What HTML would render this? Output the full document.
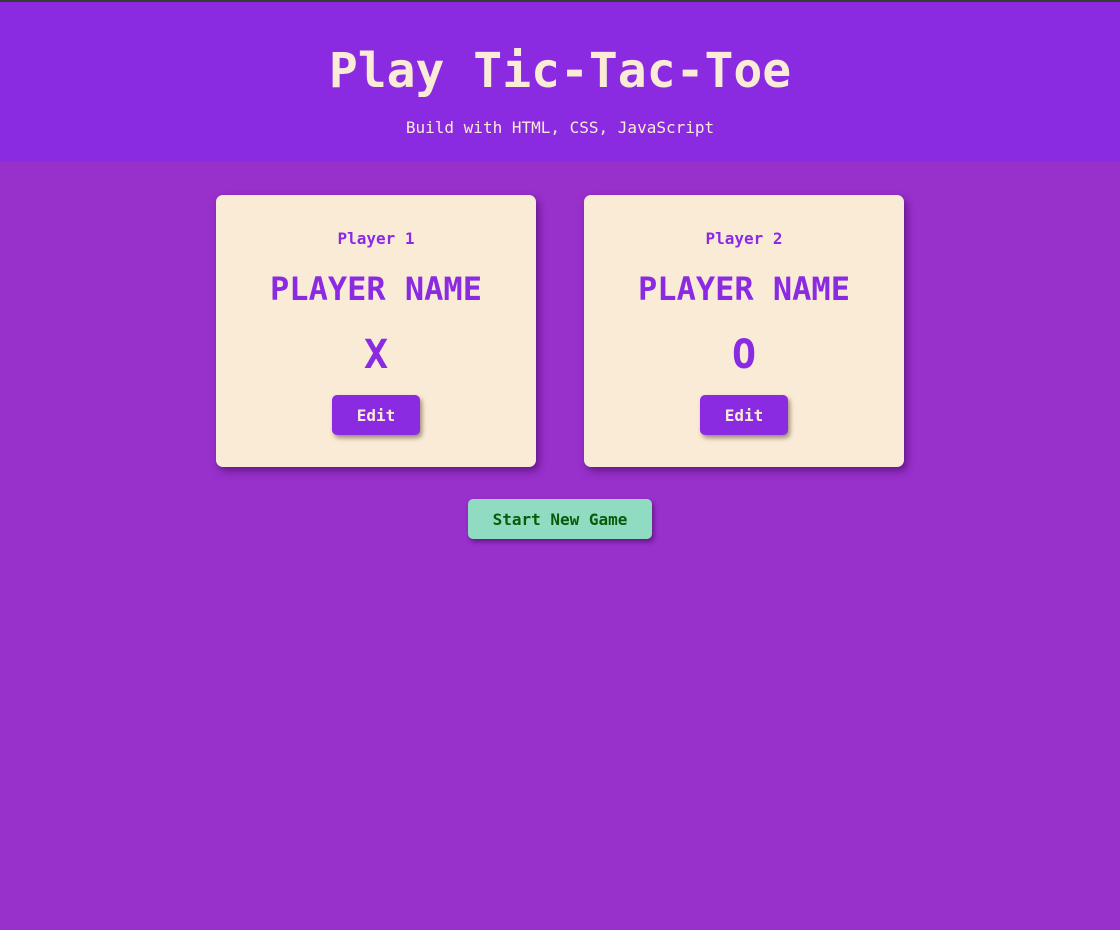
<!DOCTYPE html>
<html><head><meta charset="utf-8"><style>
*{margin:0;padding:0;box-sizing:border-box}
body{width:1120px;height:930px;background:#9830cb;font-family:"DejaVu Sans Mono","Liberation Mono",monospace;border-top:2px solid #3a3a3a;position:relative;overflow:hidden}
header{background:#8a2be2;height:160px;text-align:center;color:#faebd7;position:relative}
h1{position:absolute;left:0;right:0;top:39px;font-size:48px;line-height:60px;font-weight:bold}
header p{position:absolute;left:0;right:0;top:114px;font-size:16px;line-height:24px}
.card{position:absolute;top:193px;width:320px;height:272px;background:#faebd7;border-radius:7px;box-shadow:3px 4px 8px rgba(60,0,90,.55);text-align:center;color:#8a2be2}
.c1{left:216px}.c2{left:584px}
.lab{position:absolute;left:0;right:0;top:34px;font-size:16px;font-weight:bold;line-height:20px}
.nm{position:absolute;left:0;right:0;top:74px;font-size:32px;font-weight:bold;line-height:40px}
.sym{position:absolute;left:0;right:0;top:137px;font-size:40px;font-weight:bold;line-height:46px}
.ed{position:absolute;left:116px;top:200px;width:88px;height:40px;background:#8a2be2;color:#faebd7;border-radius:5px;font-size:16px;font-weight:bold;line-height:42px;box-shadow:2px 3px 5px rgba(80,60,30,.55)}
.start{position:absolute;left:468px;top:497px;width:184px;height:40px;background:#8fdcc2;color:#0a5a0a;border-radius:5px;font-size:16px;font-weight:bold;line-height:42px;text-align:center;box-shadow:2px 3px 5px rgba(50,0,70,.5)}
</style></head><body>
<header><h1>Play Tic-Tac-Toe</h1><p>Build with HTML, CSS, JavaScript</p></header>
<div class="card c1"><div class="lab">Player 1</div><div class="nm">PLAYER NAME</div><div class="sym">X</div><div class="ed">Edit</div></div>
<div class="card c2"><div class="lab">Player 2</div><div class="nm">PLAYER NAME</div><div class="sym">O</div><div class="ed">Edit</div></div>
<div class="start">Start New Game</div>
</body></html>
